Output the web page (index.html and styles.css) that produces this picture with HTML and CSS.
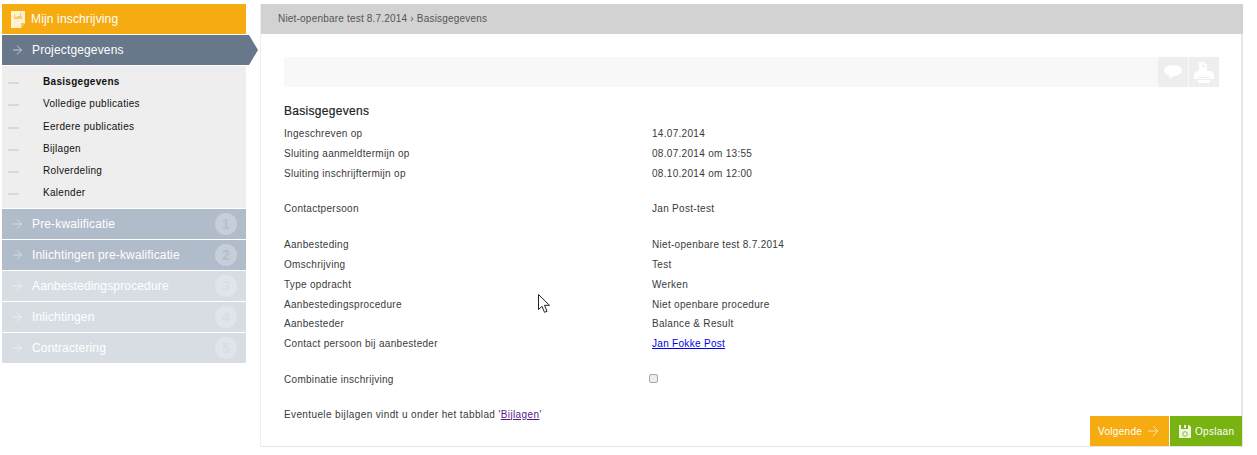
FILE: index.html
```html
<!DOCTYPE html>
<html lang="en">
<head>
  <meta charset="UTF-8">
  <title>Mijn inschrijving</title>
  <link rel="stylesheet" href="styles.css">
</head>
<body>
  <div class="page">
    <div class="sidebar">
      <div class="side-title">
        <svg class="title-icon" width="14" height="17" viewBox="0 0 14 17"><path d="M0 0h14v12l-4 5H0z" fill="#fdf1d0"/><path d="M10 17v-5h4z" fill="#f8c65c"/><path d="M3 3h1v3h2V5h3V2h1v3h1v3H3z" fill="#f5ca76"/></svg>
        Mijn inschrijving
      </div>
      <div class="step step-active">
        <svg class="arrow" width="10" height="12" viewBox="0 0 10 12"><path d="M4 1.500l4.500 4.500L4 10.500M0 6h8.500" fill="none" stroke="#c3cad3" stroke-width="1"/></svg>
        Projectgegevens
      </div>
      <ul class="subnav">
        <li class="current">Basisgegevens</li>
        <li>Volledige publicaties</li>
        <li>Eerdere publicaties</li>
        <li>Bijlagen</li>
        <li>Rolverdeling</li>
        <li>Kalender</li>
      </ul>
      <div class="step step-mid">
        <svg class="arrow" width="10" height="12" viewBox="0 0 10 12"><path d="M4 1.500l4.500 4.500L4 10.500M0 6h8.500" fill="none" stroke="#d6dbe2" stroke-width="1"/></svg>
        Pre-kwalificatie<span class="num">1</span>
      </div>
      <div class="step step-mid">
        <svg class="arrow" width="10" height="12" viewBox="0 0 10 12"><path d="M4 1.500l4.500 4.500L4 10.500M0 6h8.500" fill="none" stroke="#d6dbe2" stroke-width="1"/></svg>
        Inlichtingen pre-kwalificatie<span class="num">2</span>
      </div>
      <div class="step step-off">
        <svg class="arrow" width="10" height="12" viewBox="0 0 10 12"><path d="M4 1.500l4.500 4.500L4 10.500M0 6h8.500" fill="none" stroke="#eceef1" stroke-width="1"/></svg>
        Aanbestedingsprocedure<span class="num">3</span>
      </div>
      <div class="step step-off">
        <svg class="arrow" width="10" height="12" viewBox="0 0 10 12"><path d="M4 1.500l4.500 4.500L4 10.500M0 6h8.500" fill="none" stroke="#eceef1" stroke-width="1"/></svg>
        Inlichtingen<span class="num">4</span>
      </div>
      <div class="step step-off">
        <svg class="arrow" width="10" height="12" viewBox="0 0 10 12"><path d="M4 1.500l4.500 4.500L4 10.500M0 6h8.500" fill="none" stroke="#eceef1" stroke-width="1"/></svg>
        Contractering<span class="num">5</span>
      </div>
    </div>

    <div class="main">
      <div class="crumbs">Niet-openbare test 8.7.2014 › Basisgegevens</div>
      <div class="content">
        <div class="toolbar">
          <span class="tool">
            <svg width="18" height="14" viewBox="0 0 18 14"><ellipse cx="9" cy="5.500" rx="9" ry="5.500" fill="#fff"/><path d="M6 9l-.5 5L11 10z" fill="#fff"/></svg>
          </span>
          <span class="tool">
            <svg width="20" height="21" viewBox="0 0 20 21"><path d="M5 0h5l3 3v6H5z" fill="#fff"/><path d="M8 1h1v3h3v1H8z" fill="#eee"/><path d="M3 9h14l3 3v5H0v-5z" fill="#fff"/><path d="M4 15h12v1H4z" fill="#eee"/><path d="M4 18h12v3H4z" fill="#fff"/></svg>
          </span>
        </div>
        <h2>Basisgegevens</h2>
        <div class="rows">
          <div class="row"><span>Ingeschreven op</span><span>14.07.2014</span></div>
          <div class="row"><span>Sluiting aanmeldtermijn op</span><span>08.07.2014 om 13:55</span></div>
          <div class="row"><span>Sluiting inschrijftermijn op</span><span>08.10.2014 om 12:00</span></div>
        </div>
        <div class="rows rows-contact">
          <div class="row"><span>Contactpersoon</span><span>Jan Post-test</span></div>
        </div>
        <div class="rows rows-tender">
          <div class="row"><span>Aanbesteding</span><span>Niet-openbare test 8.7.2014</span></div>
          <div class="row"><span>Omschrijving</span><span>Test</span></div>
          <div class="row"><span>Type opdracht</span><span>Werken</span></div>
          <div class="row"><span>Aanbestedingsprocedure</span><span>Niet openbare procedure</span></div>
          <div class="row"><span>Aanbesteder</span><span>Balance &amp; Result</span></div>
          <div class="row"><span>Contact persoon bij aanbesteder</span><span><a href="#">Jan Fokke Post</a></span></div>
        </div>
        <div class="rows rows-combi">
          <div class="row"><span>Combinatie inschrijving</span><span><input type="checkbox" class="check"></span></div>
        </div>
        <p class="note">Eventuele bijlagen vindt u onder het tabblad '<a href="#" class="visited">Bijlagen</a>'</p>
      </div>
      <div class="actions">
        <div class="btn btn-next">Volgende
          <svg width="11" height="12" viewBox="0 0 11 12"><path d="M5 1l5 5-5 5M0 6h10" fill="none" stroke="#fbe3b0" stroke-width="1"/></svg>
        </div>
        <div class="btn btn-save">
          <svg width="12" height="13" viewBox="0 0 12 13"><path d="M0 0h2v4h7V0h1l2 2v11H0z" fill="#eef6dc"/><path d="M5 0h2v3H5z" fill="#eef6dc"/><circle cx="6" cy="9" r="2.300" fill="none" stroke="#8fb84a"/></svg>
          Opslaan
        </div>
      </div>
    </div>
  </div>

  <svg class="cursor" width="12" height="20" viewBox="0 0 12 20"><path d="M.5.500v15l3.500-3.200 2.500 6 2.500-1-2.500-6h5z" fill="#fff" stroke="#222" stroke-width="1"/></svg>
</body>
</html>
```

FILE: styles.css
```css
html, body {
  margin: 0;
  height: 100%;
}
body {
  font-family: "Liberation Sans", Arial, sans-serif;
  font-size: 10px;
  letter-spacing: 0.3px;
  color: #3a3a3a;
  background: #fff;
  overflow: hidden;
}
.page {
  display: flex;
  align-items: flex-start;
  padding: 4px 0 0 2px;
}

/* left column */
.sidebar {
  width: 244px;
  margin-right: 14px;
  flex-shrink: 0;
}
.side-title {
  display: flex;
  align-items: center;
  height: 30px;
  background: #f6ab11;
  color: #fff;
  font-size: 12px;
  letter-spacing: 0.15px;
  padding-left: 9px;
  box-sizing: border-box;
}
.title-icon {
  margin-right: 6px;
}
.step {
  position: relative;
  display: flex;
  align-items: center;
  height: 30px;
  margin-top: 1px;
  padding-left: 11px;
  color: #fff;
  font-size: 12px;
  letter-spacing: 0.15px;
}
.step .arrow {
  margin-right: 9px;
}
.step-active {
  background: #68778a;
}
.step-active::after {
  content: "";
  position: absolute;
  left: 244px;
  top: 0;
  width: 12px;
  height: 30px;
  background: #68778a;
  clip-path: polygon(0 0, 3px 0, 100% 50%, 3px 100%, 0 100%);
}
.step-mid {
  background: #b1bcca;
}
.step-off {
  background: #d8dde4;
}
.step-off .num {
  color: #d9dee4;
  background: #e1e4e9;
}
.num {
  position: absolute;
  right: 9px;
  top: 4px;
  width: 22px;
  height: 22px;
  border-radius: 50%;
  background: #c6ced9;
  color: #b4bfcc;
  font-size: 14px;
  font-weight: bold;
  line-height: 22px;
  text-align: center;
}
.subnav {
  list-style: none;
  margin: 1px 0 0;
  padding: 5px 0 0;
  height: 137px;
  background: #eeeeee;
  color: #111;
}
.subnav li {
  position: relative;
  height: 22.300px;
  line-height: 22px;
  padding-left: 41px;
}
.subnav li::before {
  content: "";
  position: absolute;
  left: 6px;
  top: 11px;
  width: 11px;
  height: 2px;
  background: #d9d9d9;
}
.subnav .current {
  font-weight: bold;
}

/* right column */
.main {
  position: relative;
  width: 983px;
  height: 443px;
  box-sizing: border-box;
  border-right: 2px solid #e6e6e6;
  border-bottom: 1px solid #e6e6e6;
  border-left: 1px solid #eeeeee;
}
.crumbs {
  height: 30px;
  line-height: 29px;
  margin-right: -2px;
  background: #d2d2d2;
  color: #555;
  padding-left: 17px;
  letter-spacing: 0.2px;
}
.content {
  padding: 23px 22px 0 23px;
}
.toolbar {
  display: flex;
  justify-content: flex-end;
  gap: 1px;
  height: 30px;
  background: #f8f8f8;
}
.tool {
  display: flex;
  align-items: center;
  justify-content: center;
  width: 30px;
  background: #eeeeee;
}
h2 {
  margin: 16px 0 5px;
  font-size: 12px;
  font-weight: normal;
  line-height: 16px;
  color: #222;
  -webkit-text-stroke: 0.2px #222;
}
.row {
  display: flex;
  height: 19.800px;
  line-height: 20px;
}
.row span:first-child {
  width: 368px;
  flex-shrink: 0;
}
.rows-contact {
  margin-top: 16px;
}
.rows-tender {
  margin-top: 16px;
}
.rows-combi {
  margin-top: 16px;
}
.check {
  appearance: none;
  display: block;
  box-sizing: border-box;
  width: 9px;
  height: 9px;
  margin: 4px 0 0 -3px;
  border: 1px solid #a8a8a8;
  border-radius: 2px;
  background: #ececec;
}
.note {
  margin: 19px 0 0;
  letter-spacing: 0.38px;
}
a {
  color: #0000ee;
}
a.visited {
  color: #551a8b;
}
.actions {
  position: absolute;
  right: -1px;
  bottom: 0;
  display: flex;
  gap: 1px;
}
.btn {
  display: flex;
  align-items: center;
  height: 30px;
  color: #fff;
  box-sizing: border-box;
}
.btn-next {
  width: 79px;
  padding-left: 8px;
  gap: 6px;
  background: #f6ab11;
}
.btn-save {
  width: 72px;
  padding-left: 9px;
  gap: 4px;
  background: #78b312;
}
.cursor {
  position: absolute;
  left: 538px;
  top: 294px;
}
```
